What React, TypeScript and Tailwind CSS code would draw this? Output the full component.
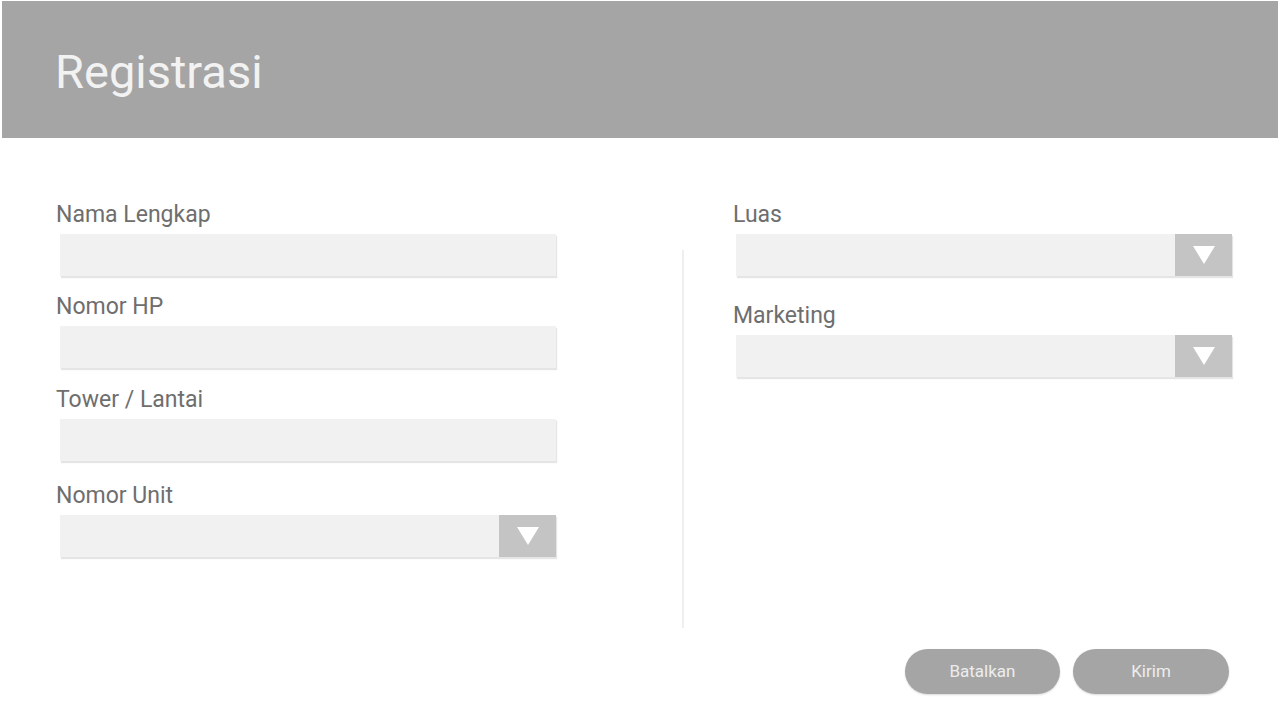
import React from 'react';

const font = { fontFamily: '"Roboto", "Liberation Sans", sans-serif' };

function Label({ children }: { children: React.ReactNode }) {
  return <div className="h-[24px] text-[23px] leading-[27px] text-[#6e6e6e]">{children}</div>;
}

function TextField({ label, top }: { label: string; top: string }) {
  return (
    <div className={top}>
      <Label>{label}</Label>
      <div className="mt-[9px] ml-[4px] h-[42px] w-[496px] bg-[#f1f1f1] shadow-[1px_2px_1px_rgba(0,0,0,0.10)]" />
    </div>
  );
}

function SelectField({ label, top, offset }: { label: string; top: string; offset: string }) {
  return (
    <div className={top}>
      <Label>{label}</Label>
      <div className={`mt-[9px] ${offset} flex h-[42px] w-[496px] bg-[#f1f1f1] shadow-[1px_2px_1px_rgba(0,0,0,0.10)]`}>
        <div className="flex-1" />
        <div className="flex w-[57px] items-center justify-center bg-[#c4c4c4]">
          <svg width="24" height="20" viewBox="0 0 24 20">
            <polygon points="1,1 23,1 12,19" fill="#ffffff" />
          </svg>
        </div>
      </div>
    </div>
  );
}

export default function App() {
  return (
    <div className="h-[720px] w-[1280px] bg-white overflow-hidden" style={font}>
      {/* Header */}
      <div className="mx-[2px] mt-[1px] h-[137px] bg-[#a5a5a5] flex items-center pl-[53px]">
        <h1 className="text-[47px] leading-none text-[#f2f2f2] pt-[4px]">Registrasi</h1>
      </div>

      {/* Form */}
      <div className="flex">
        <div className="w-[556px] pl-[56px]">
          <TextField label="Nama Lengkap" top="mt-[63px]" />
          <TextField label="Nomor HP" top="mt-[17px]" />
          <TextField label="Tower / Lantai" top="mt-[18px]" />
          <SelectField label="Nomor Unit" top="mt-[21px]" offset="ml-[4px]" />
        </div>

        <div className="ml-[126px] mt-[112px] h-[378px] w-[2px] bg-[#efefef]" />

        <div className="ml-[49px]">
          <SelectField label="Luas" top="mt-[63px]" offset="ml-[3px]" />
          <SelectField label="Marketing" top="mt-[26px]" offset="ml-[3px]" />
        </div>
      </div>

      {/* Actions */}
      <div className="mt-[21px] flex justify-end gap-[13px] pr-[51px]">
        <button className="h-[45px] w-[155px] rounded-full bg-[#a5a5a5] text-[17px] text-[#ededed] shadow-[0_1px_2px_rgba(0,0,0,0.15)]">
          Batalkan
        </button>
        <button className="h-[45px] w-[156px] rounded-full bg-[#a5a5a5] text-[17px] text-[#ededed] shadow-[0_1px_2px_rgba(0,0,0,0.15)]">
          Kirim
        </button>
      </div>
    </div>
  );
}
